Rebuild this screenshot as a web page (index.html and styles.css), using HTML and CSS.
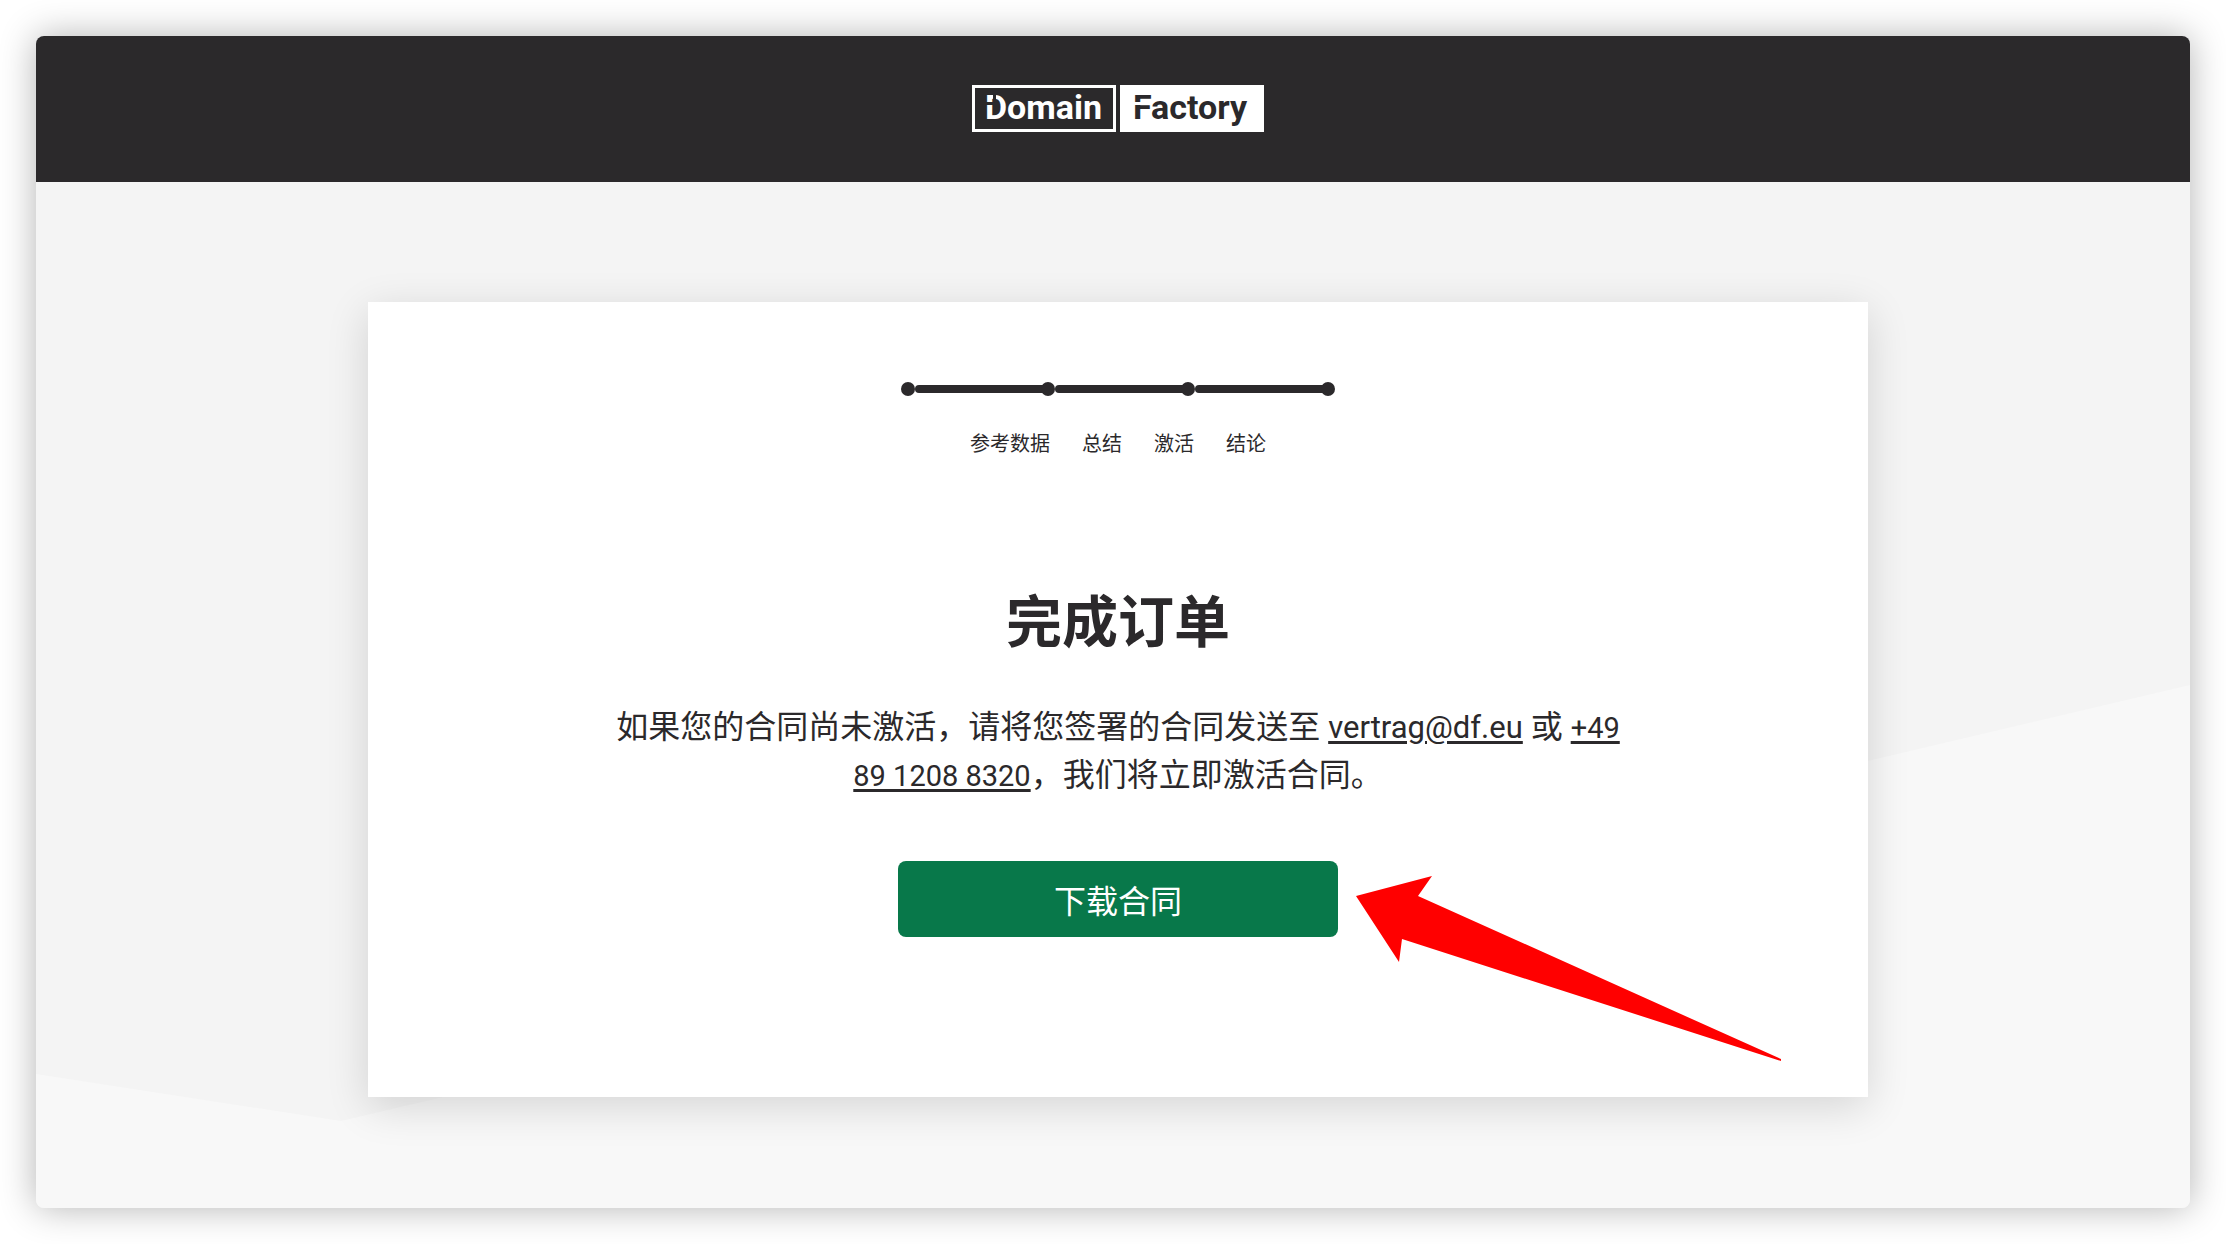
FILE: index.html
```html
<!DOCTYPE html>
<html lang="zh-CN">
<head>
<meta charset="utf-8">
<meta name="viewport" content="width=device-width, initial-scale=1">
<title>DomainFactory</title>
<link rel="stylesheet" href="styles.css">
</head>
<body>
<div class="window">
  <header class="header">
    <a class="logo" href="#" aria-label="DomainFactory">
      <span class="logo-part logo-domain">Domain</span>
      <span class="logo-part logo-factory">Factory</span>
    </a>
  </header>
  <main class="main">
    <svg class="backdrop" viewBox="0 0 2154 1026" preserveAspectRatio="none" aria-hidden="true">
      <path d="M0 892 L305 939 L2154 503 V1026 H0 Z" fill="#f8f8f8"/>
    </svg>
    <section class="card">
      <div class="track" aria-hidden="true">
        <span class="dot"></span><span class="bar"></span><span class="dot"></span><span class="bar"></span><span class="dot"></span><span class="bar"></span><span class="dot"></span>
      </div>
      <ol class="steps">
        <li>参考数据</li>
        <li>总结</li>
        <li>激活</li>
        <li>结论</li>
      </ol>
      <h1 class="title">完成订单</h1>
      <p class="text">如果您的合同尚未激活，请将您签署的合同发送至 <a class="mail" href="mailto:vertrag@df.eu">vertrag@df.eu</a> 或 <a class="phone" href="tel:+498912088320">+49 89 1208 8320</a>，我们将立即激活合同。</p>
      <div class="action">
        <button class="button" type="button">下载合同</button>
        <svg class="arrow" viewBox="0 0 426 186" aria-hidden="true">
          <path d="M0 20 L76 0 L62 20 L425 183 L425 185 L46 63 L43 86 Z" fill="#f00"/>
        </svg>
      </div>
    </section>
  </main>
</div>
</body>
</html>
```
FILE: styles.css
```css
* {
  box-sizing: border-box;
}

body {
  margin: 0;
  padding: 36px;
  min-height: 100vh;
  display: flex;
  background: #fff;
  color: #2b292b;
  font-family: Roboto, "Noto Sans CJK SC", sans-serif;
}

.window {
  flex: 1;
  display: flex;
  flex-direction: column;
  border-radius: 8px;
  overflow: hidden;
  background: #f4f4f4;
  box-shadow: 0 0 36px rgba(0, 0, 0, 0.3);
}

.header {
  display: flex;
  justify-content: center;
  padding: 49px 0 50px 10px;
  background: #2b292b;
}

.logo {
  display: flex;
  gap: 4px;
  text-decoration: none;
}

.logo-part {
  position: relative;
  width: 144px;
  height: 47px;
  padding-left: 10px;
  border: 3px solid #fff;
  font-size: 34px;
  font-weight: 700;
  line-height: 39px;
  color: #fff;
}

.logo-factory {
  background: #fff;
  color: #2b292b;
}

/* Stencil cuts through the two capitals */
.logo-part::before,
.logo-domain::after {
  content: "";
  position: absolute;
  left: 8px;
  top: 14px;
  width: 10px;
  height: 3px;
  background: #2b292b;
}

.logo-factory::before {
  width: 20px;
  background: #fff;
}

.logo-domain::after {
  left: 18px;
  top: 4px;
  width: 3px;
  height: 13px;
}

.main {
  position: relative;
  flex: 1;
  padding: 120px 0 111px 10px;
}

.backdrop {
  position: absolute;
  inset: 0;
  width: 100%;
  height: 100%;
}

.card {
  position: relative;
  display: flex;
  flex-direction: column;
  align-items: center;
  width: 1500px;
  max-width: 90%;
  margin: 0 auto;
  padding: 80px 240px 160px;
  background: #fff;
  box-shadow: 0 10px 40px rgba(0, 0, 0, 0.14);
}

.track {
  display: flex;
  align-items: center;
}

.dot {
  width: 14px;
  height: 14px;
  border-radius: 50%;
  background: #2b292b;
}

.bar {
  width: 130px;
  height: 8px;
  margin-right: -4px;
  border-radius: 4px 0 0 4px;
  background: #2b292b;
}

.steps {
  display: flex;
  gap: 32px;
  margin: 32px 0 0;
  padding: 0;
  list-style: none;
  font-size: 20px;
  line-height: 32px;
}

.title {
  margin: 128px 0 0;
  font-size: 56px;
  font-weight: 700;
  line-height: 70px;
}

.text {
  margin: 45px 0 0;
  font-size: 32px;
  line-height: 48px;
  text-align: center;
}

.text a {
  color: inherit;
  line-height: 1;
  text-decoration-thickness: 3px;
  text-underline-offset: 3px;
}

.mail {
  font-size: 31px;
}

.phone {
  font-size: 29px;
}

.action {
  position: relative;
  margin-top: 62px;
}

.button {
  display: block;
  width: 440px;
  height: 76px;
  border: 0;
  border-radius: 8px;
  background: #08784a;
  color: #fff;
  font-family: inherit;
  font-size: 32px;
}

/* Pointer lying over the card, aimed at the button */
.arrow {
  position: absolute;
  left: 458px;
  top: 15px;
  width: 426px;
  height: 186px;
}
```
